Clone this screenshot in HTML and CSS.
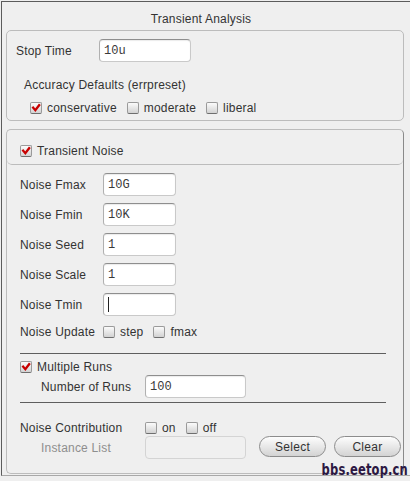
FILE: index.html
```html
<!DOCTYPE html>
<html>
<head>
<meta charset="utf-8">
<link rel="stylesheet" href="styles.css">
</head>
<body>
<div class="frame">
  <div class="title">Transient Analysis</div>

  <div class="panel panel-top">
    <div class="row row-stop">
      <span class="lbl lbl-stop">Stop Time</span>
      <span class="field field-stop">10u</span>
    </div>
    <div class="line acc">Accuracy Defaults (errpreset)</div>
    <div class="line checks acc-checks">
      <span class="cb checked"><svg viewBox="0 0 12 12"><path d="M2.6 5.6 L5.2 8.6 L9.8 2.6"/></svg></span><span class="cbl">conservative</span>
      <span class="cb"></span><span class="cbl">moderate</span>
      <span class="cb"></span><span class="cbl">liberal</span>
    </div>
  </div>

  <div class="panel panel-noise">
    <div class="noise-head">
      <span class="cb checked"><svg viewBox="0 0 12 12"><path d="M2.6 5.6 L5.2 8.6 L9.8 2.6"/></svg></span><span class="cbl head-lbl">Transient Noise</span>
    </div>
    <div class="noise-body">
      <div class="row frow first"><span class="lbl">Noise Fmax</span><span class="field">10G</span></div>
      <div class="row frow"><span class="lbl">Noise Fmin</span><span class="field">10K</span></div>
      <div class="row frow"><span class="lbl">Noise Seed</span><span class="field">1</span></div>
      <div class="row frow"><span class="lbl">Noise Scale</span><span class="field">1</span></div>
      <div class="row frow"><span class="lbl">Noise Tmin</span><span class="field"><span class="caret"></span></span></div>
      <div class="line checks update">
        <span class="lbl">Noise Update</span>
        <span class="cb"></span><span class="cbl">step</span>
        <span class="cb"></span><span class="cbl">fmax</span>
      </div>
      <div class="sep sep1"></div>
      <div class="line checks multi">
        <span class="cb checked"><svg viewBox="0 0 12 12"><path d="M2.6 5.6 L5.2 8.6 L9.8 2.6"/></svg></span><span class="cbl head-lbl">Multiple Runs</span>
      </div>
      <div class="row runs">
        <span class="lbl lbl-ind">Number of Runs</span>
        <span class="field field-wide">100</span>
      </div>
      <div class="sep sep2"></div>
      <div class="line checks contrib">
        <span class="lbl lbl-contrib">Noise Contribution</span>
        <span class="cb"></span><span class="cbl">on</span>
        <span class="cb"></span><span class="cbl">off</span>
      </div>
      <div class="row inst">
        <span class="lbl lbl-ind disabled">Instance List</span>
        <span class="field field-wide field-disabled"></span>
        <span class="btn btn-select">Select</span>
        <span class="btn btn-clear">Clear</span>
      </div>
    </div>
  </div>
  <div class="watermark">bbs.eetop.cn</div>
</div>
</body>
</html>
```

FILE: styles.css
```css
html, body {
  margin: 0;
  padding: 0;
  background: #efefef;
}
body {
  width: 410px;
  height: 481px;
  overflow: hidden;
  font-family: "Liberation Sans", Arial, sans-serif;
  font-size: 12px;
  color: #333;
}
.frame {
  position: relative;
  margin: 1px 0 0 1px;
  border-top: 1px solid #5c5c5c;
  border-left: 1px solid #5c5c5c;
  border-bottom: 1px solid #a8a8a8;
  padding: 0 6px 1px 4px;
}
.title {
  text-align: center;
  line-height: 16px;
  padding: 9px 8px 3px 0;
  letter-spacing: 0.2px;
}
.panel {
  border: 1px solid #bcbcbc;
  border-radius: 5px;
}
.panel-top {
  height: 89px;
  padding-left: 9px;
  box-sizing: content-box;
}
.row {
  display: flex;
  align-items: center;
}
.line {
  line-height: 16px;
  height: 16px;
}
.checks {
  display: flex;
  align-items: center;
}
.lbl {
  letter-spacing: 0.2px;
  white-space: nowrap;
}
.lbl-stop {
  width: 83px;
}
.row-stop {
  margin-top: 8px;
  height: 23px;
}
.field {
  box-sizing: border-box;
  display: flex;
  align-items: center;
  width: 73px;
  height: 23px;
  padding-left: 4px;
  background: #fff;
  border: 1px solid #c9c9c9;
  border-top-color: #8e8e8e;
  border-left-color: #b0b0b0;
  border-radius: 4px;
  box-shadow: inset 0 1px 1px rgba(0, 0, 0, 0.08);
  font-family: "Liberation Mono", "Courier New", monospace;
  font-size: 12px;
  color: #3a3a3a;
}
.field-stop {
  width: 92px;
}
.acc {
  margin-top: 15px;
  padding-left: 8px;
  letter-spacing: 0.2px;
}
.acc-checks {
  margin-top: 7px;
  padding-left: 14px;
}
.cb {
  box-sizing: border-box;
  flex: none;
  width: 12px;
  height: 12px;
  border: 1px solid #9a9a9a;
  border-bottom-color: #6e6e6e;
  border-radius: 2px;
  background: linear-gradient(#fbfbfb, #d2d2d2);
  display: inline-flex;
}
.cb svg {
  width: 10px;
  height: 10px;
}
.cb svg path {
  fill: none;
  stroke: #c80000;
  stroke-width: 2.8;
  stroke-linecap: square;
}
.cbl {
  margin-left: 5px;
  margin-right: 10px;
  letter-spacing: 0.2px;
}
.panel-noise {
  margin-top: 8px;
  height: 343px;
  border-right-color: #8a8a8a;
}
.noise-head {
  display: flex;
  align-items: center;
  height: 16px;
  padding: 13px 0 5px 13px;
  border-bottom: 1px solid #bcbcbc;
  border-radius: 0 0 5px 5px;
}
.head-lbl {
  margin-left: 5px;
}
.noise-body {
  padding-left: 13px;
}
.frow .lbl {
  width: 83px;
}
.frow {
  margin-top: 7px;
}
.frow.first {
  margin-top: 8px;
}
.caret {
  width: 1px;
  height: 15px;
  background: #222;
}
.update {
  margin-top: 8px;
}
.update .lbl {
  width: 83px;
}
.sep {
  height: 1px;
  background: #5e5e5e;
  margin-right: 17px;
}
.sep1 {
  margin-top: 13px;
}
.multi {
  margin-top: 5px;
}
.runs {
  margin-top: 0;
}
.lbl-ind {
  margin-left: 21px;
  width: 104px;
}
.field-wide {
  width: 101px;
}
.sep2 {
  margin-top: 4px;
}
.contrib {
  margin-top: 17px;
}
.lbl-contrib {
  width: 125px;
}
.inst {
  margin-top: 0;
}
.disabled {
  color: #8e8e8e;
}
.field-disabled {
  background: #f0f0f0;
  border-color: #d4d4d4;
  box-shadow: none;
}
.btn {
  box-sizing: border-box;
  height: 21px;
  border: 1px solid #8c8c8c;
  border-radius: 11px;
  background: linear-gradient(#fdfdfd, #e8e8e8 50%, #d3d3d3);
  display: flex;
  align-items: center;
  justify-content: center;
  letter-spacing: 0.3px;
  align-self: flex-start;
}
.btn-select {
  width: 67px;
  margin-left: 13px;
}
.btn-clear {
  width: 67px;
  margin-left: 8px;
}
.watermark {
  position: absolute;
  right: 2px;
  bottom: -4px;
  font-family: "DejaVu Sans Condensed", "DejaVu Sans", sans-serif;
  font-weight: bold;
  font-size: 16px;
  line-height: 18px;
  color: #2c1842;
  transform: scaleX(0.8);
  transform-origin: right bottom;
  letter-spacing: 0.2px;
  white-space: nowrap;
}
```
